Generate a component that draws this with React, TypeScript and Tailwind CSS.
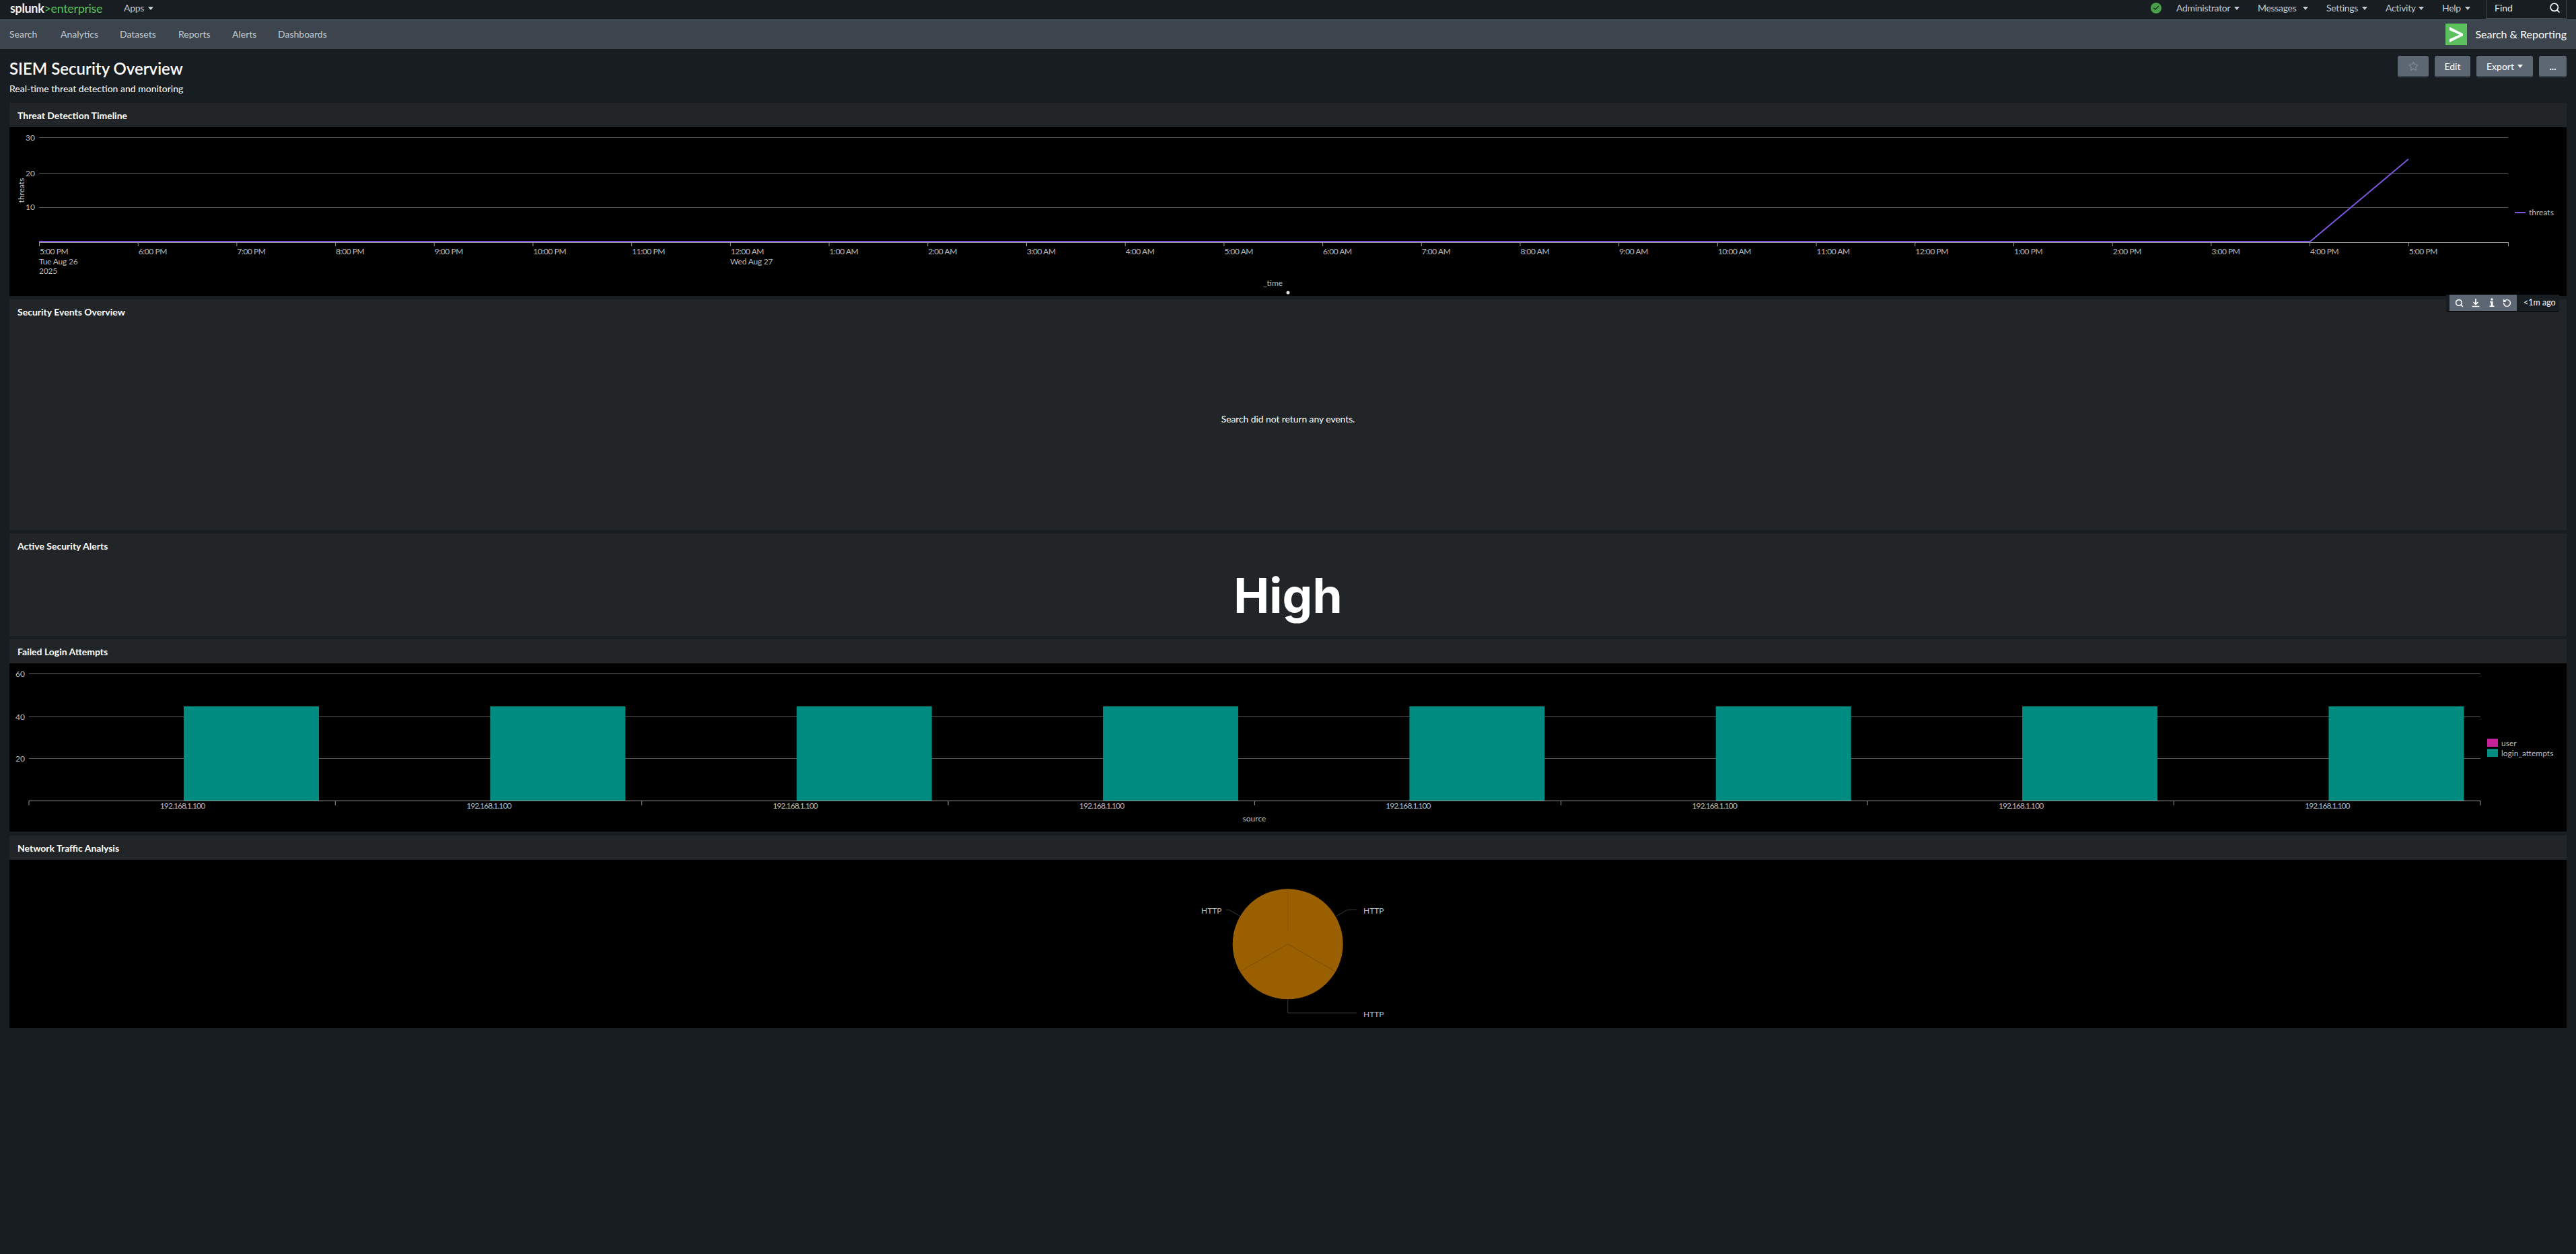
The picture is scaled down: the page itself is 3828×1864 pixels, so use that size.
import React from "react";
import { Search, Star, RotateCcw, Check } from "lucide-react";

const Caret = () => (
  <svg width="8" height="5" viewBox="0 0 8 5" className="ml-auto mt-[1px] shrink-0">
    <path d="M0 0H8L4 5Z" fill="currentColor" />
  </svg>
);

const NavMenu = ({ label, className }: { label: string; className: string }) => (
  <div className={`flex items-center whitespace-nowrap pb-[5px] text-[14px] tracking-[-0.3px] text-[#c3cbd4] ${className}`}>
    {label}
    <Caret />
  </div>
);

const PanelTitle = ({ children }: { children: React.ReactNode }) => (
  <div className="flex h-[36px] items-center px-[12px] text-[14px] font-bold text-white">{children}</div>
);

const hours = [
  "5:00 PM","6:00 PM","7:00 PM","8:00 PM","9:00 PM","10:00 PM","11:00 PM","12:00 AM","1:00 AM","2:00 AM","3:00 AM","4:00 AM","5:00 AM","6:00 AM","7:00 AM","8:00 AM","9:00 AM","10:00 AM","11:00 AM","12:00 PM","1:00 PM","2:00 PM","3:00 PM","4:00 PM","5:00 PM",
];

const GRID = "#565656";
const AXIS = "#969696";
const LABEL = "#bcbcbc";

const TimelineChart = () => {
  const step = 146.7;
  const x0 = 58;
  return (
    <svg viewBox="14 189 3800 251" className="block h-[251px] w-[3800px] bg-black">
      {[204.5, 257.5, 308.5].map((y) => (
        <line key={y} x1={58} x2={3727} y1={y} y2={y} stroke={GRID} />
      ))}
      <line x1={58} x2={3727} y1={360.5} y2={360.5} stroke={AXIS} />
      {hours.map((h, i) => (
        <g key={i}>
          <line x1={x0 + i * step + 0.5} x2={x0 + i * step + 0.5} y1={360} y2={366} stroke={AXIS} />
          <text x={x0 + i * step + 1} y={378} fontSize="12" letterSpacing="-0.45" fill={LABEL}>{h}</text>
        </g>
      ))}
      <line x1={3727.5} x2={3727.5} y1={360} y2={366} stroke={AXIS} />
      <text x={58} y={393} fontSize="12" letterSpacing="-0.2" fill={LABEL}>Tue Aug 26</text>
      <text x={58} y={407} fontSize="12" letterSpacing="-0.2" fill={LABEL}>2025</text>
      <text x={1085} y={393} fontSize="12" letterSpacing="-0.2" fill={LABEL}>Wed Aug 27</text>
      {[["30", 209], ["20", 262], ["10", 312]].map(([t, y]) => (
        <text key={t} x={52} y={y} fontSize="12" textAnchor="end" fill={LABEL}>{t}</text>
      ))}
      <text transform="translate(36 283) rotate(-90)" fontSize="12" textAnchor="middle" fill={LABEL}>threats</text>
      <polyline points="58,359 3433,359 3579,236.5" fill="none" stroke="#7b56db" strokeWidth="2" />
      <line x1={3737} x2={3753} y1={316} y2={316} stroke="#7b56db" strokeWidth="2" />
      <text x={3758} y={320} fontSize="12" fill={LABEL}>threats</text>
      <text x={1877} y={425} fontSize="12" fill={LABEL}>_time</text>
      <circle cx={1914} cy={435} r={2.5} fill="#e4e4e4" />
    </svg>
  );
};

const BarChart = () => {
  const step = 455.35;
  return (
    <svg viewBox="14 986 3800 250" className="block h-[250px] w-[3800px] bg-black">
      {[1001.5, 1065.5, 1127.5].map((y) => (
        <line key={y} x1={43} x2={3686} y1={y} y2={y} stroke={GRID} />
      ))}
      {[["60", 1006], ["40", 1070], ["20", 1132]].map(([t, y]) => (
        <text key={t} x={37} y={y} fontSize="12" textAnchor="end" fill={LABEL}>{t}</text>
      ))}
      {Array.from({ length: 8 }).map((_, i) => (
        <g key={i}>
          <rect x={273 + i * step} y={1050} width={201} height={140} fill="#008c80" />
          <line x1={43 + i * step} x2={43 + i * step} y1={1190} y2={1197} stroke={AXIS} />
          <text x={271 + i * step} y={1202} fontSize="12" letterSpacing="-0.9" textAnchor="middle" fill={LABEL}>192.168.1.100</text>
        </g>
      ))}
      <line x1={3686} x2={3686} y1={1190} y2={1197} stroke={AXIS} />
      <line x1={43} x2={3686} y1={1190.5} y2={1190.5} stroke={AXIS} />
      <text x={1864} y={1221} fontSize="12" textAnchor="middle" fill={LABEL}>source</text>
      <rect x={3696} y={1098} width={16} height={12} fill="#c6229a" />
      <rect x={3696} y={1113} width={16} height={12} fill="#008c80" />
      <text x={3717} y={1109} fontSize="12" fill={LABEL}>user</text>
      <text x={3717} y={1124} fontSize="12" fill={LABEL}>login_attempts</text>
    </svg>
  );
};

const PieChart = () => {
  const cx = 1913.7;
  const cy = 1403.3;
  const r = 82;
  return (
    <svg viewBox="14 1278 3800 250" className="block h-[250px] w-[3800px] bg-black">
      <circle cx={cx} cy={cy} r={r} fill="#9a5f00" />
      <line x1={cx} y1={cy - r} x2={cx} y2={cy - 18} stroke="#8a5504" strokeWidth="0.7" />
      <line x1={cx} y1={cy} x2={cx + 71} y2={cy + 41} stroke="#6e4605" strokeWidth="0.7" />
      <line x1={cx} y1={cy} x2={cx - 71} y2={cy + 41} stroke="#6e4605" strokeWidth="0.7" />
      <polyline points="1985.7,1361.7 2002.3,1352.3 2016,1352.3" fill="none" stroke="#3a3a3a" />
      <polyline points="1842.7,1361.7 1826,1352.3 1822,1352.3" fill="none" stroke="#3a3a3a" />
      <polyline points="1913.7,1485.7 1913.7,1505.7 2016,1505.7" fill="none" stroke="#3a3a3a" />
      <text x={1785} y={1358} fontSize="12" fill={LABEL}>HTTP</text>
      <text x={2026} y={1358} fontSize="12" fill={LABEL}>HTTP</text>
      <text x={2026} y={1512} fontSize="12" fill={LABEL}>HTTP</text>
    </svg>
  );
};

const Btn = ({ children, className }: { children: React.ReactNode; className: string }) => (
  <div className={`flex h-[32px] items-center justify-center rounded-[3px] border-b-2 border-[#3c444d] bg-[#5c6773] text-[14px] text-white ${className}`}>
    {children}
  </div>
);

export default function App() {
  return (
    <div className="flex min-h-[1864px] flex-col bg-[#171d21] font-['Lato',sans-serif] text-white">
      <header className="flex h-[28px] items-center justify-between pl-[15px]">
        <div className="flex items-center">
          <div className="w-[169px] whitespace-nowrap pb-[5px] text-[18px] leading-none tracking-[-0.35px]">
            <span className="font-bold text-[#f0f2f3]">splunk</span>
            <span className="text-[#5cc05c]">&gt;enterprise</span>
          </div>
          <NavMenu label="Apps" className="w-[44px]" />
        </div>
        <div className="flex h-full items-center">
          <div className="mr-[22px] mb-[5px] flex h-[16px] w-[16px] items-center justify-center rounded-full bg-[#4ba04b] text-[#12241a]">
            <Check size={10} strokeWidth={3} />
          </div>
          <div className="flex items-center gap-[27px]">
            <NavMenu label="Administrator" className="w-[94px]" />
            <NavMenu label="Messages" className="w-[75px]" />
            <NavMenu label="Settings" className="w-[61px]" />
            <NavMenu label="Activity" className="w-[57px]" />
            <NavMenu label="Help" className="w-[42px]" />
          </div>
          <div className="mr-[14px] ml-[23px] flex h-full w-[120px] items-center justify-between border-x border-b border-[#3c444d] pr-[8px] pb-[4px] pl-[12px] text-[14px] text-[#e4e7ea]">
            Find
            <Search size={17} strokeWidth={2.4} className="text-white" />
          </div>
        </div>
      </header>

      <nav className="flex h-[45px] items-center justify-between bg-[#3c444d] px-[14px]">
        <div className="flex items-center text-[14px] text-[#c3cbd4]">
          <span className="w-[76px]">Search</span>
          <span className="w-[88px]">Analytics</span>
          <span className="w-[87px]">Datasets</span>
          <span className="w-[80px]">Reports</span>
          <span className="w-[68px]">Alerts</span>
          <span>Dashboards</span>
        </div>
        <div className="flex items-center gap-[12px] text-[16px] text-white">
          <div className="flex h-[32px] w-[32px] items-center justify-center bg-[#5cc05c]">
            <svg width="24" height="24" viewBox="0 0 24 24">
              <path d="M2 1L22 11V14L2 24V19L17 12.5L2 6Z" fill="#fff" />
            </svg>
          </div>
          Search &amp; Reporting
        </div>
      </nav>

      <section className="flex h-[80px] justify-between px-[14px] pt-[10px]">
        <div className="pt-[1px]">
          <h1 className="text-[24px] leading-[36px] font-semibold text-white">SIEM Security Overview</h1>
          <p className="mt-[3px] text-[14px] leading-[18px] text-white">Real-time threat detection and monitoring</p>
        </div>
        <div className="flex gap-[9px]">
          <Btn className="w-[46px]"><Star size={15} className="text-[#7d8894]" /></Btn>
          <Btn className="w-[53px]">Edit</Btn>
          <Btn className="w-[84px] px-[15px]">Export<Caret /></Btn>
          <Btn className="w-[41px] font-bold">...</Btn>
        </div>
      </section>

      <main className="flex flex-col px-[14px]">
        <div className="bg-[#212527]">
          <PanelTitle>Threat Detection Timeline</PanelTitle>
          <TimelineChart />
        </div>

        <div className="relative mt-[5px] h-[343px] bg-[#212527]">
          <PanelTitle>Security Events Overview</PanelTitle>
          <div className="flex h-[283px] items-center justify-center text-[14px] tracking-[-0.1px] text-white">
            Search did not return any events.
          </div>
          <div className="absolute -top-[7px] right-[11px] flex h-[26px] w-[168px] rounded-b-[4px] border-b border-black bg-[#171d21] pl-[5px]">
            <div className="flex h-[24px] w-[100px] items-center justify-between bg-[#5c6773] px-[8px] text-white">
              <Search size={13} strokeWidth={3} />
              <svg width="14" height="14" viewBox="0 0 14 14">
                <path d="M7 1V9M3.5 6L7 9.5L10.500 6M1.500 12.500H12.500" fill="none" stroke="#fff" strokeWidth="1.700" />
              </svg>
              <svg width="10" height="14" viewBox="0 0 10 14">
                <circle cx="5" cy="2" r="1.700" fill="#fff" />
                <path d="M2 5H6.500V11.500H8.500V13H1.500V11.500H3.500V6.500H2Z" fill="#fff" />
              </svg>
              <RotateCcw size={13} strokeWidth={2.6} />
            </div>
            <span className="ml-[10px] text-[12.5px] leading-[24px] text-white">&lt;1m ago</span>
          </div>
        </div>

        <div className="mt-[5px] h-[152px] bg-[#212527]">
          <PanelTitle>Active Security Alerts</PanelTitle>
          <div className="mt-[18px] flex justify-center font-['Inter',sans-serif] text-[71px] leading-[76px] font-bold text-white">High</div>
        </div>

        <div className="mt-[5px] bg-[#212527]">
          <PanelTitle>Failed Login Attempts</PanelTitle>
          <BarChart />
        </div>

        <div className="mt-[6px] bg-[#212527]">
          <PanelTitle>Network Traffic Analysis</PanelTitle>
          <PieChart />
        </div>
      </main>
    </div>
  );
}
